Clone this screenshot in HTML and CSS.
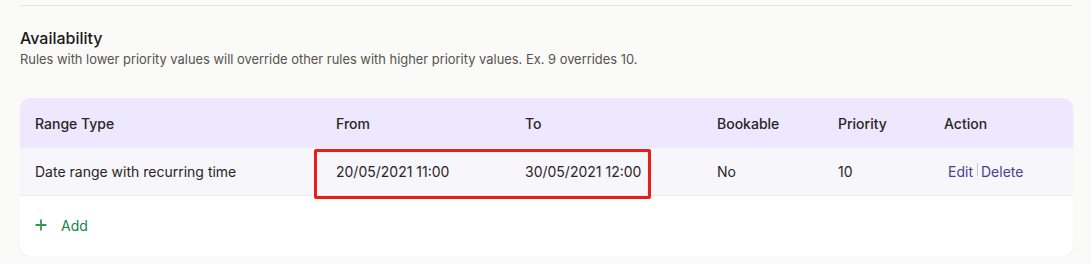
FILE: index.html
```html
<!DOCTYPE html>
<html lang="en">
<head>
<meta charset="utf-8">
<title>Availability</title>
<link rel="stylesheet" href="styles.css">
</head>
<body>
<div class="page">
  <div class="divider"></div>
  <h2 class="title">Availability</h2>
  <p class="subtitle">Rules with lower priority values will override other rules with higher priority values. Ex. 9 overrides 10.</p>
  <div class="card">
    <div class="grid head">
      <div>Range Type</div>
      <div>From</div>
      <div>To</div>
      <div>Bookable</div>
      <div>Priority</div>
      <div>Action</div>
    </div>
    <div class="grid row">
      <div>Date range with recurring time</div>
      <div>20/05/2021 11:00</div>
      <div>30/05/2021 12:00</div>
      <div>No</div>
      <div>10</div>
      <div class="actions"><a class="act">Edit</a><span class="sep"></span><a class="act">Delete</a></div>
    </div>
    <div class="add">
      <svg class="plus" width="12" height="12" viewBox="0 0 12 12"><path d="M6 0.5V11.5M0.5 6H11.5" stroke="#2f9a50" stroke-width="1.8" fill="none"/></svg>
      <span class="add-label">Add</span>
    </div>
    <div class="highlight"></div>
  </div>
</div>
</body>
</html>
```
FILE: styles.css
```css
html, body {
  margin: 0;
  padding: 0;
  background: #fafaf9;
  font-family: Inter, "Noto Sans", sans-serif;
  color: #292524;
}
.page {
  padding: 5px 18px 0 20px;
}
.divider {
  height: 1px;
  background: #e5e5e3;
}
.title {
  margin: 21px 0 0;
  font-size: 16px;
  line-height: 22px;
  font-weight: 500;
  color: #1c1917;
}
.subtitle {
  margin: 2px 0 0;
  font-size: 12.9px;
  line-height: 18px;
  color: #57534e;
}
.card {
  position: relative;
  margin-top: 29px;
  background: #ffffff;
  border-radius: 10px;
  box-shadow: 0 1px 2px rgba(0,0,0,0.06);
}
.grid {
  display: grid;
  grid-template-columns: 301px 189px 192px 121px 106px 1fr;
  padding-left: 15px;
  align-items: center;
  font-size: 14px;
}
.head {
  height: 50px;
  background: #ede8fd;
  border-radius: 10px 10px 0 0;
  font-weight: 500;
  color: #292524;
}
.row {
  height: 47px;
  background: #f7f6fb;
  border-bottom: 1px solid #ebeaee;
  color: #292524;
}
.actions {
  display: flex;
  align-items: center;
  padding-left: 4px;
}
.act {
  color: #4a3f8f;
}
.sep {
  width: 1px;
  height: 13px;
  background: #c9c7cf;
  margin: -4px 3px 0 4px;
}
.add {
  height: 58px;
  padding: 0 0 2px 15px;
  display: flex;
  align-items: center;
}
.plus {
  display: block;
}
.add-label {
  margin-left: 14px;
  font-size: 14px;
  color: #178246;
}
.highlight {
  position: absolute;
  left: 294px;
  top: 51px;
  width: 331px;
  height: 44px;
  border: 3px solid #ee1b1b;
  border-radius: 2px;
}
```
